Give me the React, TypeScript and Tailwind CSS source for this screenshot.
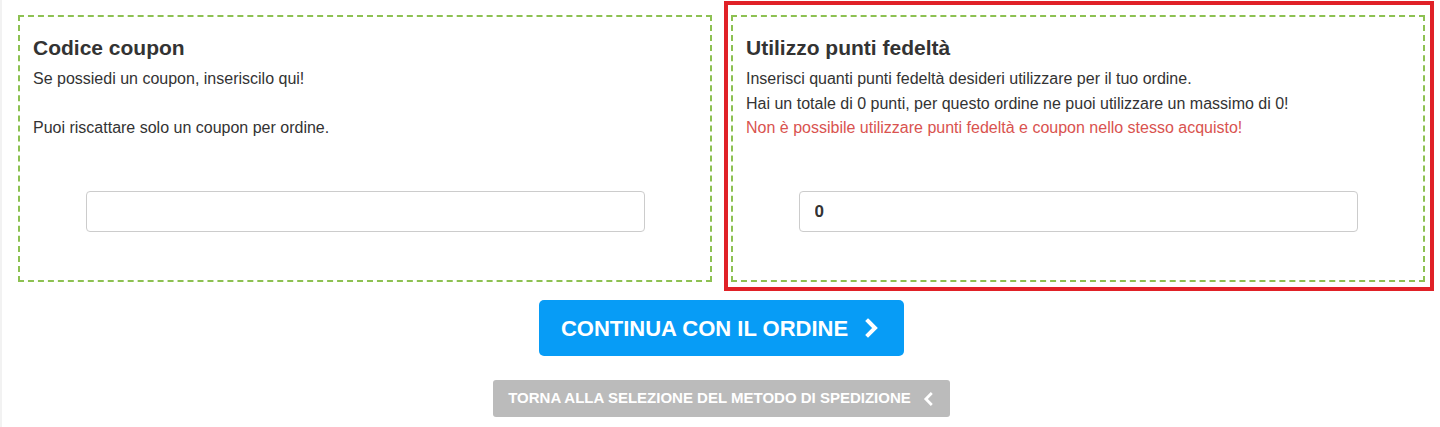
import React from 'react';

const Chevron: React.FC<{ dir: 'left' | 'right'; className?: string }> = ({ dir, className }) => (
  <svg viewBox="0 0 20 20" className={className} fill="none" stroke="currentColor" strokeWidth={4} strokeLinecap="square" strokeLinejoin="miter">
    {dir === 'right' ? <polyline points="6,3 13,10 6,17" /> : <polyline points="14,3 7,10 14,17" />}
  </svg>
);

const App: React.FC = () => {
  return (
    <div className="min-h-[427px] bg-white border-l-2 border-[#f2f2f2] text-[#333] font-['Liberation_Sans',Arial,sans-serif]">
      <div className="pl-[16px] pr-[15px] pt-[15px]">
        <div className="grid grid-cols-2 gap-[19px]">
          {/* Coupon */}
          <div className="h-[267px] border-2 border-dashed border-[#8dc152] px-[13px] pt-[20px] pb-[48px] flex flex-col">
            <h3 className="text-[21px] leading-[22px] font-bold">Codice coupon</h3>
            <p className="mt-[8px] text-[16px] leading-[24.5px]">
              Se possiedi un coupon, inseriscilo qui!
              <br />
              <br />
              Puoi riscattare solo un coupon per ordine.
            </p>
            <input
              type="text"
              className="mt-auto mx-auto w-[559px] h-[41px] border border-[#ccc] rounded-[4px] px-4 text-[16px] font-bold outline-none"
            />
          </div>

          {/* Punti fedeltà */}
          <div className="relative">
            <div className="absolute -left-[7px] -right-[9px] -top-[14px] -bottom-[9px] border-4 border-[#e02127] pointer-events-none" />
            <div className="h-[267px] border-2 border-dashed border-[#8dc152] px-[13px] pt-[20px] pb-[48px] flex flex-col">
              <h3 className="text-[21px] leading-[22px] font-bold">Utilizzo punti fedeltà</h3>
              <div className="mt-[8px] text-[16px] leading-[24.5px]">
                <p>Inserisci quanti punti fedeltà desideri utilizzare per il tuo ordine.</p>
                <p>Hai un totale di 0 punti, per questo ordine ne puoi utilizzare un massimo di 0!</p>
                <p className="text-[#d9534f]">Non è possibile utilizzare punti fedeltà e coupon nello stesso acquisto!</p>
              </div>
              <input
                type="text"
                defaultValue="0"
                className="mt-auto mx-auto w-[559px] h-[41px] border border-[#ccc] rounded-[4px] px-[15px] text-[17px] font-bold text-[#333] outline-none"
              />
            </div>
          </div>
        </div>

        <div className="flex flex-col items-center pt-[18px]">
          <button className="h-[56px] px-[22px] rounded-[5px] bg-[#079cf6] text-white text-[22px] font-bold flex items-center gap-[14px]">
            CONTINUA CON IL ORDINE
            <Chevron dir="right" className="w-[20px] h-[20px]" />
          </button>
          <button className="mt-[24px] h-[37px] px-[15px] rounded-[3px] bg-[#bbbbbb] text-white text-[15px] font-bold flex items-center gap-[10px]">
            TORNA ALLA SELEZIONE DEL METODO DI SPEDIZIONE
            <Chevron dir="left" className="w-[14px] h-[14px]" />
          </button>
        </div>
      </div>
    </div>
  );
};

export default App;
